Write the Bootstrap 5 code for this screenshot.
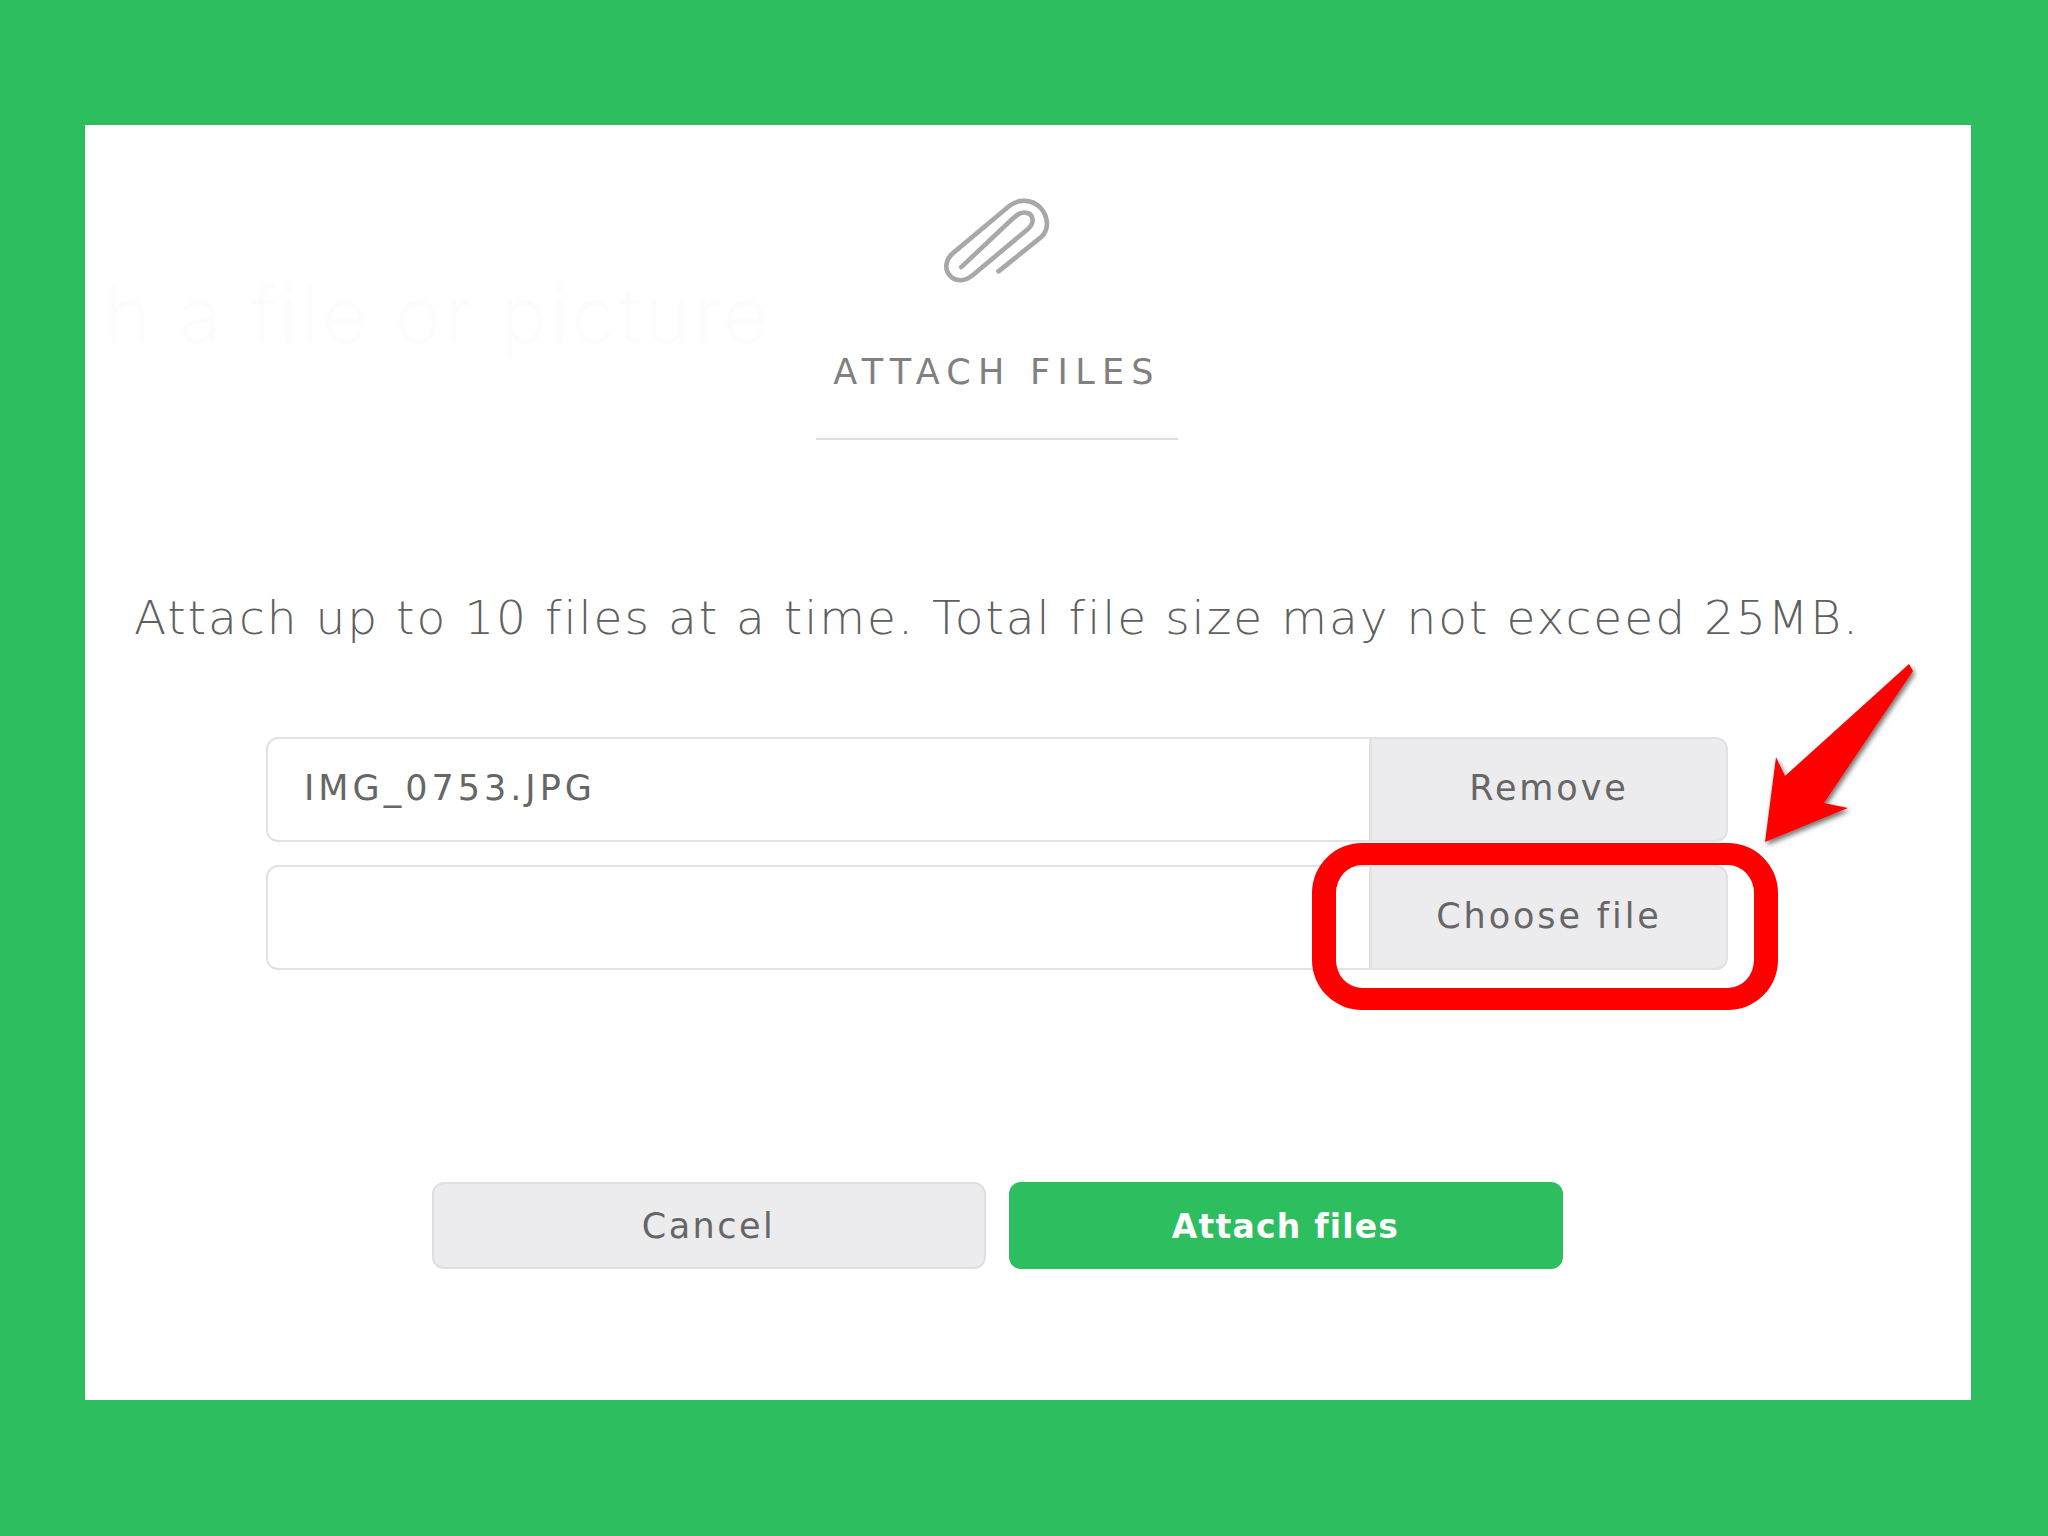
<!DOCTYPE html>
<html lang="en">
<head>
    <meta charset="UTF-8">
    <meta name="viewport" content="width=device-width, initial-scale=1.0">
    <title>Attach files</title>
    <link href="https://cdn.jsdelivr.net/npm/bootstrap@5.3.0/dist/css/bootstrap.min.css" rel="stylesheet">
    <style>
        body {
            background-color: #2dbe60;
            font-family: "DejaVu Sans", "Inter", sans-serif;
            height: 1536px;
            overflow: hidden;
        }
        .sheet {
            width: 1886px;
            height: 1275px;
            margin: 125px 0 0 85px;
            padding-right: 62px;
            background-color: #fff;
        }
        .ghost-text {
            left: 20px;
            top: 140px;
            font-family: "Inter", sans-serif;
            font-size: 78px;
            line-height: 100px;
            font-weight: 300;
            letter-spacing: 3px;
            color: #fcfcfc;
            white-space: nowrap;
        }
        .clip-icon {
            width: 113px;
            height: 93px;
            margin-top: 70px;
        }
        .sheet-title {
            margin: 64px 0 0;
            font-size: 35px;
            line-height: 40px;
            font-weight: 400;
            letter-spacing: 7.3px;
            color: #808080;
        }
        .title-rule {
            width: 362px;
            height: 2px;
            margin-top: 46px;
            background-color: #dddddd;
        }
        .limit-text {
            margin: 148px 0 0;
            font-size: 47px;
            line-height: 60px;
            font-weight: 200;
            letter-spacing: 2px;
            color: #5f5f5f;
            white-space: nowrap;
        }
        .file-rows {
            width: 1462px;
            margin-top: 89px;
            gap: 23px;
        }
        .file-rows .input-group {
            height: 105px;
        }
        .file-rows .form-control {
            padding: 0 36px 2px;
            font-size: 35px;
            letter-spacing: 4px;
            color: #666666;
            border: 2px solid #e2e1e4;
            border-radius: 12px;
        }
        .file-rows .btn {
            width: 358px;
            font-size: 35px;
            letter-spacing: 2.9px;
            padding-bottom: 8px;
            color: #666666;
            background-color: #ecebed;
            border: 2px solid #e2e1e4;
            border-radius: 12px;
        }
        .red-outline {
            left: 1046px;
            top: -22px;
            width: 466px;
            height: 167px;
            border: solid #ff0000;
            border-width: 22px 24px;
            border-radius: 50px;
            pointer-events: none;
        }
        .red-arrow {
            left: 1660px;
            top: 520px;
            width: 190px;
            height: 215px;
        }
        .sheet-actions {
            margin-top: 212px;
            gap: 23px;
        }
        .sheet-actions .btn {
            width: 554px;
            height: 87px;
            padding-top: 8px;
            border-radius: 12px;
        }
        .btn-dismiss {
            font-size: 35px;
            letter-spacing: 2.5px;
            color: #666666;
            background-color: #ecebed;
            border: 2px solid #dfdee1;
        }
        .btn-attach {
            font-size: 33px;
            letter-spacing: 1.2px;
            color: #fff;
            font-weight: 700;
            background-color: #2dbe60;
            border: 0;
        }
    </style>
</head>
<body>
    <div class="sheet position-relative d-flex flex-column align-items-center overflow-hidden">
        <div class="ghost-text position-absolute">h a file or picture</div>

        <svg class="clip-icon position-relative" viewBox="484 105 340 280" fill="none" stroke="#a8a8a8" stroke-width="14" stroke-linecap="round">
            <path d="M657 335 L785 232 C812 208 806 168 782 142 C758 118 720 116 692 136 L520 280 C494 302 494 334 515 352 C536 370 562 360 580 346 L745 208 C768 188 762 160 738 158 C722 156 712 166 700 176 L545 322"/>
        </svg>

        <h1 class="sheet-title position-relative">ATTACH FILES</h1>
        <div class="title-rule position-relative"></div>

        <p class="limit-text position-relative">Attach up to 10 files at a time. Total file size may not exceed 25MB.</p>

        <div class="file-rows d-flex flex-column position-relative">
            <div class="input-group">
                <input type="text" class="form-control" value="IMG_0753.JPG" aria-label="File name">
                <button class="btn" type="button">Remove</button>
            </div>
            <div class="position-relative">
                <div class="input-group">
                    <input type="text" class="form-control" aria-label="File name">
                    <button class="btn" type="button">Choose file</button>
                </div>
                <div class="red-outline position-absolute"></div>
            </div>
        </div>

        <div class="sheet-actions d-flex position-relative">
            <button class="btn btn-dismiss" type="button">Cancel</button>
            <button class="btn btn-attach" type="button">Attach files</button>
        </div>

        <svg class="red-arrow position-absolute" viewBox="1745 645 190 215">
            <defs>
                <filter id="arrowShadow" x="-20%" y="-20%" width="140%" height="140%">
                    <feDropShadow dx="2" dy="3" stdDeviation="2.5" flood-color="#000" flood-opacity=".55"/>
                </filter>
            </defs>
            <polygon fill="#ff0000" filter="url(#arrowShadow)" points="1909,664 1913,671 1824,803 1848,808 1765,842 1776,757 1785,776"/>
        </svg>
    </div>

    <script src="https://cdn.jsdelivr.net/npm/bootstrap@5.3.0/dist/js/bootstrap.bundle.min.js"></script>
</body>
</html>
